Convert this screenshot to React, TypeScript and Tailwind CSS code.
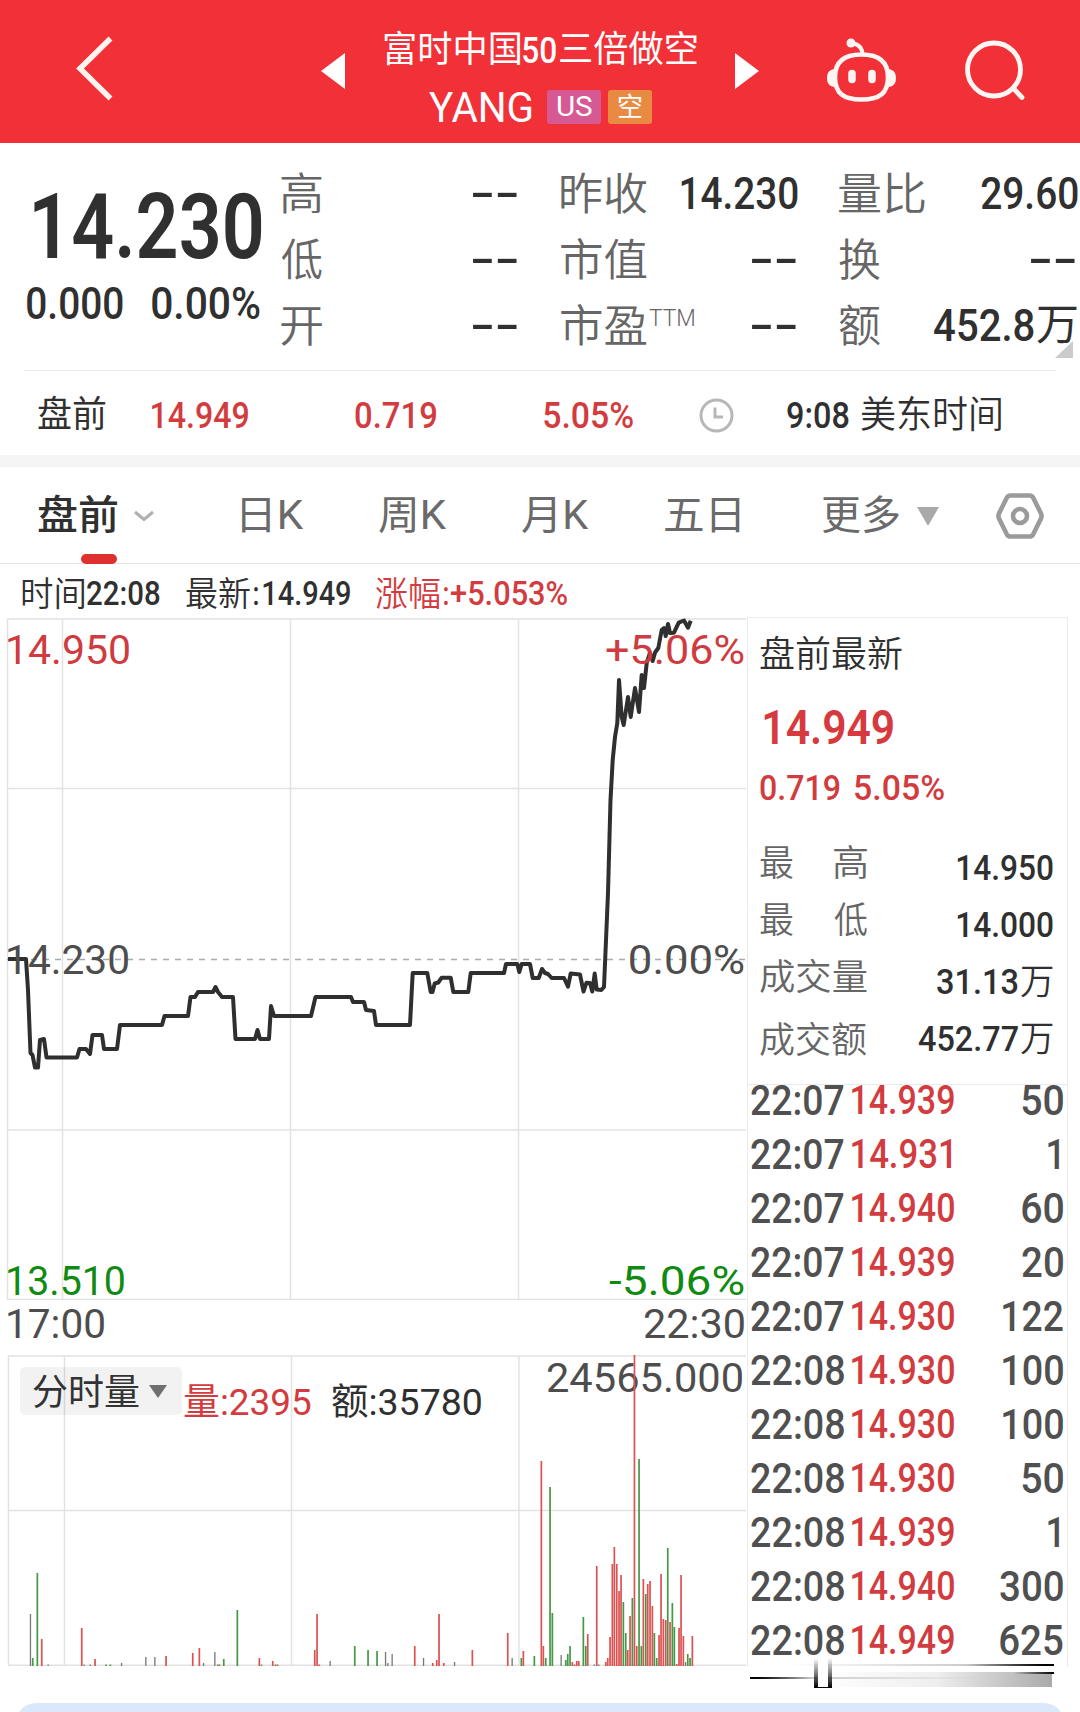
import { useLayoutEffect, useRef, type ReactNode } from "react";

/** A line of text whose ink spans exactly the width of its box. */
function Fit({ className = "", children }: { className?: string; children: string }) {
  const outer = useRef<HTMLSpanElement>(null);
  const inner = useRef<HTMLSpanElement>(null);
  useLayoutEffect(() => {
    const o = outer.current;
    const i = inner.current;
    const ctx = document.createElement("canvas").getContext("2d");
    if (!o || !i || !ctx) return;
    const cs = getComputedStyle(i);
    ctx.font = `${cs.fontWeight} ${cs.fontSize} ${cs.fontFamily}`;
    const m = ctx.measureText(children);
    const s = o.clientWidth / (m.actualBoundingBoxLeft + m.actualBoundingBoxRight);
    i.style.transform = `translateX(${m.actualBoundingBoxLeft * s}px) scaleX(${s})`;
  }, [children]);
  return (
    <span ref={outer} className={`block shrink-0 whitespace-nowrap leading-none ${className}`}>
      <span ref={inner} className="block w-max origin-left whitespace-pre">
        {children}
      </span>
    </span>
  );
}

function Dashes({ className = "" }: { className?: string }) {
  return <Fit className={`w-[46px] text-[44px] font-medium text-[#303030] ${className}`}>--</Fit>;
}

function Header() {
  return (
    <header className="flex h-[143px] shrink-0 items-start bg-[#f23037] text-white">
      <svg className="mt-[34px] ml-[74px] h-[69px] w-[42px] shrink-0" viewBox="0 0 42 69" fill="none" stroke="#fff3f0" strokeWidth="5.500">
        <path d="M36.500 4.500L6 34.500L36.500 64.500" />
      </svg>
      <svg className="mt-[53px] ml-[205px] h-[36px] w-[24px] shrink-0" viewBox="0 0 24 36" fill="#fff">
        <path d="M24 0V36L0 18Z" />
      </svg>
      <div className="mt-[31px] ml-[39px] w-[313px] shrink-0">
        <div className="flex h-[38px] items-center text-[36px]">
          <Fit className="w-[136px]">富时中国</Fit>
          <Fit className="mt-[2px] ml-[3px] w-[33px] font-medium">50</Fit>
          <Fit className="ml-[4px] w-[137px]">三倍做空</Fit>
        </div>
        <div className="mt-[21px] ml-[45px] flex h-[34px] items-center">
          <Fit className="w-[103px] text-[43px]">YANG</Fit>
          <div className="ml-[15px] flex h-[34px] w-[54px] items-center justify-center rounded-[3px] bg-[#d65994]">
            <Fit className="w-[35px] text-[28px]">US</Fit>
          </div>
          <div className="ml-[7px] flex h-[34px] w-[44px] items-center justify-center rounded-[3px] bg-[#e98a43]">
            <Fit className="w-[24px] text-[26px]">空</Fit>
          </div>
        </div>
      </div>
      <svg className="mt-[53px] ml-[38px] h-[36px] w-[24px] shrink-0" viewBox="0 0 24 36" fill="#fff">
        <path d="M0 0V36L24 18Z" />
      </svg>
      <svg className="mt-[37px] ml-[66px] h-[68px] w-[73px] shrink-0" viewBox="0 0 73 68" fill="none" stroke="#fff6f3" strokeWidth="4.600">
        <path d="M36.500 17.500C53 17.500 63 24 63 40C63 56 55 62.500 36.500 62.500C18 62.500 10 56 10 40C10 24 20 17.500 36.500 17.500Z" />
        <path d="M37.500 17C37 10 33.500 7 27 6.500" strokeWidth="4" />
        <circle cx="26" cy="6" r="4.500" fill="#fff6f3" stroke="none" />
        <path d="M9 32C4 33 2 36 2 41C2 46 4 49 9 50ZM64 32C69 33 71 36 71 41C71 46 69 49 64 50Z" fill="#fff6f3" stroke="none" />
        <path d="M27 36.500V42.500M47 36.500V42.500" strokeWidth="7.500" strokeLinecap="round" />
      </svg>
      <svg className="mt-[38px] ml-[66px] h-[65px] w-[65px] shrink-0" viewBox="0 0 65 65" fill="none" stroke="#fff6f3" strokeWidth="4.800" strokeLinecap="round">
        <circle cx="30" cy="31.500" r="26.500" />
        <path d="M50 51L58 59.500" />
      </svg>
    </header>
  );
}

function Quote() {
  const label = "text-[44px] font-[350] text-[#666] pt-[3px]";
  return (
    <section className="flex h-[227px] shrink-0 text-[#303030]">
      <div className="w-[281px] shrink-0 pt-[48px]">
        <div className="ml-[34px] flex h-[74px] items-center">
          <Fit className="w-[227px] text-[90px] font-semibold">14.230</Fit>
        </div>
        <div className="mt-[19px] ml-[27px] flex h-[38px] items-center text-[45px] font-medium">
          <Fit className="w-[96px]">0.000</Fit>
          <Fit className="ml-[29px] w-[108px]">0.00%</Fit>
        </div>
      </div>
      <div className="grid w-[237px] shrink-0 grid-rows-[66px_66px_66px] content-start pt-[17px]">
        {["高", "低", "开"].map((t) => (
          <div key={t} className="flex items-center justify-between">
            <Fit className={`w-[41px] ${label}`}>{t}</Fit>
            <Dashes />
          </div>
        ))}
      </div>
      <div className="ml-[43px] grid w-[237px] shrink-0 grid-rows-[66px_66px_66px] content-start pt-[17px]">
        <div className="flex items-center justify-between">
          <Fit className={`w-[86px] ${label}`}>昨收</Fit>
          <Fit className="w-[117px] text-[45px] font-medium">14.230</Fit>
        </div>
        <div className="flex items-center justify-between">
          <Fit className={`w-[86px] ${label}`}>市值</Fit>
          <Dashes className="mr-[1px]" />
        </div>
        <div className="flex items-center">
          <Fit className={`w-[86px] ${label}`}>市盈</Fit>
          <Fit className="mb-[15px] ml-[2px] w-[45px] text-[24px] font-light text-[#666]">TTM</Fit>
          <Dashes className="mr-[1px] ml-auto" />
        </div>
      </div>
      <div className="ml-[41px] grid w-[239px] shrink-0 grid-rows-[66px_66px_66px] content-start pt-[17px]">
        <div className="flex items-center justify-between">
          <Fit className={`w-[86px] ${label}`}>量比</Fit>
          <Fit className="w-[97px] text-[45px] font-medium">29.60</Fit>
        </div>
        <div className="flex items-center justify-between">
          <Fit className={`w-[41px] ${label}`}>换</Fit>
          <Dashes className="mr-[2px]" />
        </div>
        <div className="relative flex items-center">
          <Fit className={`w-[41px] ${label}`}>额</Fit>
          <Fit className="ml-auto w-[100px] text-[45px] font-medium">452.8</Fit>
          <Fit className="mr-[1px] ml-[3px] w-[40px] text-[43px]">万</Fit>
          <svg className="absolute right-[5px] bottom-0 h-[17px] w-[18px]" viewBox="0 0 18 17" fill="#cbcbcb">
            <path d="M18 0V17H0Z" />
          </svg>
        </div>
      </div>
    </section>
  );
}

function PreMarket() {
  return (
    <section className="mx-[24px] flex h-[85px] w-[1032px] shrink-0 items-center border-t border-[#ececec] pt-[4px] text-[37px] font-medium text-[#d23c3f]">
      <Fit className="ml-[14px] w-[68px] text-[36px] font-normal text-[#303030]">盘前</Fit>
      <Fit className="ml-[46px] w-[96px]">14.949</Fit>
      <Fit className="ml-[107px] w-[81px]">0.719</Fit>
      <Fit className="ml-[108px] w-[89px]">5.05%</Fit>
      <svg className="ml-[66px] h-[35px] w-[35px] shrink-0" viewBox="0 0 35 35" fill="none" stroke="#b7b7b7" strokeWidth="3">
        <circle cx="17.500" cy="17.500" r="15.500" />
        <path d="M16 9.500V19H24" />
      </svg>
      <Fit className="ml-[53px] w-[62px] text-[#303030]">9:08</Fit>
      <Fit className="ml-[12px] w-[140px] font-[350] text-[#303030]">美东时间</Fit>
    </section>
  );
}

function Tabs() {
  return (
    <nav className="relative flex h-[97px] shrink-0 items-center border-b border-[#e2e2e2] pt-[2px] text-[40px] text-[#6a6a6a]">
      <Fit className="ml-[38px] w-[80px] font-medium text-[#303030]">盘前</Fit>
      <svg className="ml-[16px] h-[12px] w-[20px] shrink-0" viewBox="0 0 20 12" fill="none" stroke="#b0b0b0" strokeWidth="3">
        <path d="M1 2L10 9.500L19 2" />
      </svg>
      <Fit className="ml-[88px] w-[62px]">日K</Fit>
      <Fit className="ml-[75px] w-[68px]">周K</Fit>
      <Fit className="ml-[75px] w-[67px]">月K</Fit>
      <Fit className="ml-[76px] w-[75px]">五日</Fit>
      <Fit className="ml-[82px] w-[77px]">更多</Fit>
      <svg className="ml-[18px] h-[19px] w-[22px] shrink-0" viewBox="0 0 22 19" fill="#a9a9a9">
        <path d="M0 0H22L11 19Z" />
      </svg>
      <svg className="ml-[56px] h-[48px] w-[50px] shrink-0" viewBox="0 0 50 48" fill="none" stroke="#9b9b9b" strokeWidth="4.600" strokeLinejoin="round">
        <path d="M15.500 3.500H34.500Q37 3.500 38.200 5.700L46 21.500Q47.200 24 46 26.500L38.200 42.300Q37 44.500 34.500 44.500H15.500Q13 44.500 11.800 42.300L4 26.500Q2.800 24 4 21.500L11.800 5.700Q13 3.500 15.500 3.500Z" />
        <circle cx="25" cy="24" r="7" />
      </svg>
      <span className="absolute -bottom-px left-[81px] h-[10px] w-[36px] rounded-full bg-[#df3030]" />
    </nav>
  );
}

function Legend() {
  return (
    <div className="flex h-[54px] items-center pt-[5px] text-[33px] font-medium text-[#303030]">
      <Fit className="ml-[22px] w-[62px] text-[34px] font-[350]">时间</Fit>
      <Fit className="ml-[3px] w-[73px]">22:08</Fit>
      <Fit className="ml-[26px] w-[64px] text-[34px] font-[350]">最新</Fit>
      <Fit className="ml-[4px] w-[4px]">:</Fit>
      <Fit className="ml-[5px] w-[87px]">14.949</Fit>
      <Fit className="ml-[26px] w-[64px] text-[34px] font-[350] text-[#d23c3f]">涨幅</Fit>
      <Fit className="ml-[4px] w-[4px] text-[#d23c3f]">:</Fit>
      <Fit className="ml-[3px] w-[116px] text-[#d23c3f]">+5.053%</Fit>
    </div>
  );
}

const PRICE =
  "8,959 26,959 28,990 30.500,1053 32.500,1055 35,1067.500 38,1067.500 40,1040 44,1039 46.500,1057.500 77,1057.500 79.500,1049 86,1049 90,1054 92.500,1035 102,1035 104,1049 117,1049 120,1025 162,1025 164.500,1016 188,1016 190.500,997 195,997 198,992 213,992 215.500,987 218,992 222,997 233,997 235.500,1039 255,1039 257.500,1030 260,1039 269,1039 271,1006 274,1016 311,1016 315.500,997 351,997 353,1002 364,1002 366,1010 374,1011 376,1025 410,1025 412.700,973 427.300,973 430.700,992 432.500,992 434.700,983.500 438.300,982.500 441.700,977.700 450.700,977.700 453.300,992 468.300,992 470.700,973 504,973 506,964 517.300,964 519.300,972 521.700,964 530,964 532.700,978 538.700,978 542,969 545,973 548,974 551.700,978 564,978 568,986.700 570.700,973.500 580,974.500 583.500,991.500 586.500,982.700 590,983 592.300,991.500 594.700,973.500 596.700,989.500 601.300,990 604,987 608,893 610.500,800 612.700,760 615,737 617.300,723 619,680 621.700,717 623.700,725 628,697 630.700,717 635,688 639,712 641.700,675 644,688 646.700,663 650,653 652.700,661 655,652.700 658.300,648 661.700,630 664,628 665.700,636 668,624 670,633 674,632.700 678.700,622.700 684,620.500 688,627.700 690.700,620.700";

function ChartLabel({ className, children }: { className: string; children: string }) {
  return <Fit className={`absolute text-[41px] ${className}`}>{children}</Fit>;
}

function PriceChart() {
  return (
    <div className="relative h-[683px]">
      <svg className="block h-[683px] w-[747px]" viewBox="0 617 747 683" fill="none">
        <g stroke="#e2e2e2" strokeWidth="1.500">
          <path d="M7 619H746M7 788.500H746M7 1130H746M7 1299.500H746" />
          <path d="M7.500 619V1299M62.500 619V1299M290.500 619V1299M518.500 619V1299" />
        </g>
        <path d="M7 959.500H746" stroke="#a9a9a9" strokeWidth="1.600" strokeDasharray="6 6" />
        <polyline points={PRICE} stroke="#2f2f2f" strokeWidth="4" strokeLinejoin="round" />
      </svg>
      <ChartLabel className="top-[13px] left-[8px] w-[121px] text-[#cf3b3e]">14.950</ChartLabel>
      <ChartLabel className="top-[13px] right-[3px] w-[138px] text-[#cf3b3e]">+5.06%</ChartLabel>
      <ChartLabel className="top-[323px] left-[8px] w-[120px] text-[#4d4d4d]">14.230</ChartLabel>
      <ChartLabel className="top-[323px] right-[3px] w-[114px] text-[#4d4d4d]">0.00%</ChartLabel>
      <ChartLabel className="bottom-[-2px] left-[8px] w-[116px] text-[#118a11]">13.510</ChartLabel>
      <ChartLabel className="right-[3px] bottom-[-2px] w-[135px] text-[#118a11]">-5.06%</ChartLabel>
    </div>
  );
}

type Bar = [x: number, h: number, c: "r" | "g" | "k"];
const BAR_COLOR = { r: "#dc5252", g: "#459845", k: "#777777" };
const BARS: Bar[] = [
  [30.6, 52, "k"], [32.7, 8, "g"], [37.3, 93, "g"], [41.7, 27, "r"], [48.3, 1.5, "k"], [81.7, 38, "r"], [84.3, 1.5, "k"], [90.3, 1.5, "k"], [95, 7, "r"],
  [106, 1.5, "g"], [110.3, 1.5, "g"], [121.7, 3, "k"], [146, 9, "k"], [155, 9, "k"], [166, 10, "r"], [192.7, 13, "r"], [199.3, 18, "r"],
  [203.7, 3, "k"], [215, 14, "k"], [217.7, 1.5, "g"], [219.5, 1.5, "r"], [223.7, 7, "g"], [237.3, 56, "g"], [259.3, 8, "r"], [261.7, 1.5, "k"], [272.7, 5, "r"], [275.5, 1.5, "g"], [277.5, 1.5, "r"],
  [314.7, 16, "r"], [317, 52, "r"], [319.2, 1.5, "r"], [330.3, 5, "k"], [354.7, 20, "g"], [368, 16, "g"], [377, 15, "g"], [385.7, 14, "k"], [388, 3, "k"],
  [392.3, 12, "k"], [414.7, 20, "r"], [423.7, 8, "k"], [432.7, 3, "r"], [436.7, 6, "r"], [439, 52, "r"], [443.7, 3, "r"], [454.7, 4, "k"],
  [472.3, 16, "r"], [507.7, 33, "r"], [512.3, 8, "k"], [521.3, 8, "g"], [523.3, 15, "r"], [534.3, 10, "g"], [541.3, 205, "r"],
  [543.3, 20, "r"], [545.7, 8, "g"], [550, 179, "g"], [552.3, 53, "g"], [561.3, 11, "k"], [565.7, 6, "g"], [567.7, 12, "g"], [570, 20, "g"],
  [572.3, 4, "r"], [574.5, 1.5, "r"], [576.7, 5, "r"], [578.7, 5, "r"], [583.3, 49, "g"], [585.7, 20, "g"], [587.7, 32, "r"], [594.3, 1.5, "k"], [596.7, 100, "r"], [599, 1.5, "k"],
  [605.7, 4, "r"], [607.7, 8, "r"], [610, 29, "r"], [612.3, 102, "r"], [614.3, 119, "r"], [616.7, 102, "r"], [619, 75, "r"],
  [621, 91, "r"], [623.3, 64, "g"], [625.7, 33, "g"], [627.7, 16, "r"], [630, 50, "r"], [632.3, 68, "g"], [634.4, 311, "r"],
  [636.7, 20, "r"], [639, 207, "g"], [641.3, 20, "g"], [643.3, 87, "r"], [645.7, 72, "g"], [647.7, 82, "r"], [650, 85, "r"],
  [652.3, 60, "r"], [654.3, 33, "g"], [656.7, 8, "g"], [659, 31, "r"], [661, 92, "r"], [663.3, 47, "r"], [665.7, 46, "r"],
  [667.7, 118, "g"], [670, 44, "r"], [672.3, 63, "g"], [674.3, 39, "g"], [676.7, 2, "r"], [679, 38, "r"], [681, 91, "r"],
  [683.3, 30, "r"], [685.7, 4, "k"], [687.7, 12, "g"], [690, 8, "g"], [692.3, 30, "r"],
];

function VolumeChart() {
  return (
    <div className="relative h-[312px]">
      <svg className="absolute inset-0 h-[312px] w-[747px]" viewBox="0 1355 747 312" fill="none">
        <g stroke="#e2e2e2" strokeWidth="1.500">
          <path d="M8 1356H746M8 1510.500H746M8 1665.300H746" />
          <path d="M8.500 1356V1665M64.500 1356V1665M291.500 1356V1665M519 1356V1665" />
        </g>
      </svg>
      <div className="relative flex items-start pt-[12px]">
        <div className="ml-[20px] flex h-[48px] w-[162px] shrink-0 items-center rounded-[5px] bg-black/5 text-[#333]">
          <Fit className="mt-[3px] ml-[13px] w-[106px] text-[36px]">分时量</Fit>
          <svg className="ml-[10px] h-[13px] w-[18px]" viewBox="0 0 18 13" fill="#707070">
            <path d="M0 0H18L9 13Z" />
          </svg>
        </div>
        <div className="flex h-[71px] items-center text-[37px]">
          <Fit className="ml-[2px] w-[127px] text-[#d23c3f]">量:2395</Fit>
          <Fit className="ml-[21px] w-[149px] text-[#303030]">额:35780</Fit>
        </div>
      </div>
      <Fit className="absolute top-[3px] right-[5px] w-[195px] text-[41px] text-[#4d4d4d]">24565.000</Fit>
      <svg className="absolute inset-0 h-[312px] w-[747px]" viewBox="0 1355 747 312">
        {BARS.map(([x, h, c]) => (
          <rect key={x} x={x - 0.8} y={1666 - h} width={c === "k" ? 1.3 : 1.7} height={h} fill={BAR_COLOR[c]} />
        ))}
      </svg>
    </div>
  );
}

function StatRow({ label, children }: { label: ReactNode; children: ReactNode }) {
  return (
    <div className="flex h-[57px] items-start justify-between">
      {label}
      <div className="flex items-center pt-[5px] text-[35.5px] font-medium text-[#303030]">{children}</div>
    </div>
  );
}

const TRADES: [string, string, number][] = [
  ["22:07", "14.939", 50],
  ["22:07", "14.931", 1],
  ["22:07", "14.940", 60],
  ["22:07", "14.939", 20],
  ["22:07", "14.930", 122],
  ["22:08", "14.930", 100],
  ["22:08", "14.930", 100],
  ["22:08", "14.930", 50],
  ["22:08", "14.939", 1],
  ["22:08", "14.940", 300],
  ["22:08", "14.949", 625],
];

function volumeWidth(n: number) {
  if (n > 99) return n < 200 ? "mr-[4px] w-[60px]" : "mr-[4px] w-[63px]";
  return n > 9 ? "mr-[4px] w-[41px]" : "mr-[8px] w-[11px]";
}

function SidePanel() {
  const label = "text-[36px] font-[350] text-[#666]";
  return (
    <aside className="relative h-[1050px] w-[321px] shrink-0 border-t border-r border-l border-[#ebebeb]">
      <div className="h-[466px] pt-[19px] pr-[14px] pl-[12px]">
        <Fit className="w-[142px] text-[36px] font-[350] text-[#303030]">盘前最新</Fit>
        <Fit className="mt-[31px] ml-[4px] w-[129px] text-[48px] font-semibold text-[#d73a3e]">14.949</Fit>
        <div className="mt-[19px] flex text-[35.5px] font-medium text-[#d23c3f]">
          <Fit className="w-[80px]">0.719</Fit>
          <Fit className="ml-[15px] w-[89px]">5.05%</Fit>
        </div>
        <div className="mt-[39px]">
          <StatRow label={<div className={`flex ${label}`}><Fit className="w-[33px]">最</Fit><Fit className="ml-[41px] w-[33px]">高</Fit></div>}>
            <Fit className="w-[96px]">14.950</Fit>
          </StatRow>
          <StatRow label={<div className={`flex ${label}`}><Fit className="w-[33px]">最</Fit><Fit className="ml-[41px] w-[33px]">低</Fit></div>}>
            <Fit className="w-[96px]">14.000</Fit>
          </StatRow>
          <StatRow label={<Fit className={`w-[107px] ${label}`}>成交量</Fit>}>
            <Fit className="w-[81px]">31.13</Fit>
            <Fit className="ml-[3px] w-[32px] font-[350]">万</Fit>
          </StatRow>
          <StatRow label={<Fit className={`mt-[6px] w-[106px] ${label}`}>成交额</Fit>}>
            <Fit className="w-[100px]">452.77</Fit>
            <Fit className="ml-[3px] w-[32px] font-[350]">万</Fit>
          </StatRow>
        </div>
      </div>
      <div className="border-t border-[#ebebeb] pl-[3px]">
        {TRADES.map(([time, price, volume], i) => (
          <div key={i} className="flex h-[54px] items-start text-[42px] font-medium text-[#505050]">
            <Fit className="-mt-[5px] w-[93px]">{time}</Fit>
            <Fit className={`-mt-[4px] ml-[8px] text-[40px] text-[#d23c3f] ${price.endsWith("1") ? "w-[99px]" : "w-[102px]"}`}>{price}</Fit>
            <Fit className={`-mt-[5px] ml-auto ${volumeWidth(volume)}`}>{String(volume)}</Fit>
          </div>
        ))}
      </div>
      <div className="absolute top-[1041px] left-[2px] h-[30px] w-[304px]">
        <div className="absolute top-[5px] left-[10px] h-[2px] w-[294px] bg-linear-to-r from-transparent from-10% via-[#ccc] via-70% to-black" />
        <div className="absolute top-[13px] right-[2px] h-[15px] w-[230px] bg-linear-to-r from-transparent via-[#eee] to-[#aaa]" />
        <div className="absolute top-[13px] right-0 h-[2px] w-[40px] bg-linear-to-r from-transparent to-black" />
        <div className="absolute top-[18px] left-0 h-[2px] w-[250px] bg-linear-to-r from-black via-[#ccc] via-25% to-transparent" />
        <div className="absolute -top-[1px] left-[64px] h-[30px] w-[18px] bg-linear-to-b from-white/0 to-black" />
        <div className="absolute -top-[1px] left-[68px] h-[29px] w-[10px] bg-white" />
      </div>
    </aside>
  );
}

export default function App() {
  return (
    <main className="flex h-[1712px] w-[1080px] flex-col overflow-hidden bg-white font-[Roboto,'Noto_Sans_CJK_SC',sans-serif]">
      <Header />
      <Quote />
      <PreMarket />
      <div className="h-[12px] shrink-0 bg-[#f5f5f5]" />
      <Tabs />
      <div className="flex shrink-0">
        <div className="w-[747px] shrink-0">
          <Legend />
          <div className="-mt-px">
            <PriceChart />
          </div>
          <div className="flex h-[55px] items-center justify-between pr-[3px] pl-[8px] text-[41px] text-[#4d4d4d]">
            <Fit className="mb-[6px] w-[96px]">17:00</Fit>
            <Fit className="mb-[6px] w-[100px]">22:30</Fit>
          </div>
          <VolumeChart />
        </div>
        <div className="pt-[53px]">
          <SidePanel />
        </div>
      </div>
      <div className="mx-[16px] mt-[36px] h-[20px] shrink-0 rounded-t-[20px] bg-[#dbe8fb]" />
    </main>
  );
}
